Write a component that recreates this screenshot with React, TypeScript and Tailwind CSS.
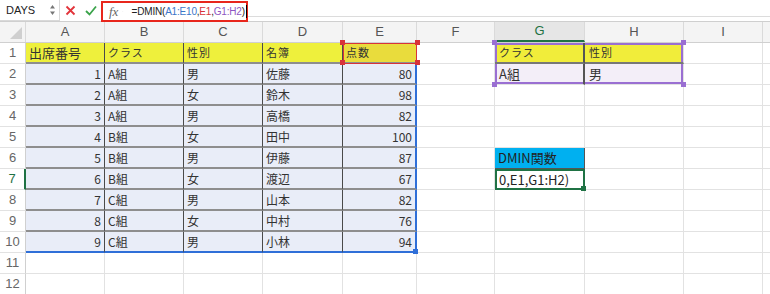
import React from 'react';

// 列幅 (行見出し, A..I, J)
const COLS = [26, 79, 79, 79, 80, 74, 78, 90, 99, 79, 20];
const LETTERS = ['', 'A', 'B', 'C', 'D', 'E', 'F', 'G', 'H', 'I', ''];

const DATA: [number, string, string, string, number][] = [
  [1, 'A組', '男', '佐藤', 80],
  [2, 'A組', '女', '鈴木', 98],
  [3, 'A組', '男', '高橋', 82],
  [4, 'B組', '女', '田中', 100],
  [5, 'B組', '男', '伊藤', 87],
  [6, 'B組', '女', '渡辺', 67],
  [7, 'C組', '男', '山本', 82],
  [8, 'C組', '女', '中村', 76],
  [9, 'C組', '男', '小林', 94],
];

const HEAD = ['出席番号', 'クラス', '性別', '名簿', '点数'];

type Corner = 'tl' | 'tr' | 'bl' | 'br';

interface CellInfo {
  text: string;
  cls: string;
  corners?: Corner[];
  dot?: string;
}

function cell(r: number, c: number): CellInfo {
  const base = 'border-r border-b border-r-[#e2e2e2] border-b-[#e2e2e2] bg-white';
  // 元データ表 A1:E10
  if (r >= 1 && r <= 10 && c >= 1 && c <= 5) {
    const right = c === 5 && r >= 2 ? 'border-r-2 border-r-[#2f6fd8]' : 'border-r border-r-[#4a4a4a]';
    const bottom = r === 10 ? 'border-b-2 border-b-[#2f6fd8]' : 'border-b-2 border-b-[#8e8e8e]';
    if (r === 1) {
      if (c === 5) {
        return {
          text: HEAD[4],
          cls: 'border-b-2 border-b-[#8e8e8e] bg-[#e9dc3c] text-[11px] tracking-[1px] pl-[3px] text-[#333] outline outline-1 -outline-offset-1 outline-[#d8333a]',
          corners: ['tl', 'tr', 'bl', 'br'],
          dot: 'bg-[#d8333a]',
        };
      }
      const size = c === 1 ? 'text-[13px]' : 'text-[11px] tracking-[1px]';
      return { text: HEAD[c - 1], cls: `${right} ${bottom} bg-[#eef03c] ${size} pl-[3px] text-[#333]` };
    }
    const v = DATA[r - 2][c - 1];
    const num = typeof v === 'number';
    return {
      text: String(v),
      cls: `${right} ${bottom} bg-[#e9edf8] text-[12px] text-[#333] ${num ? 'justify-end pr-[3px]' : 'pl-[3px]'}`,
      corners: r === 10 && c === 5 ? ['br'] : undefined,
      dot: 'bg-[#2f6fd8]',
    };
  }
  // 条件 G1:H2
  if ((r === 1 || r === 2) && (c === 7 || c === 8)) {
    const bg = r === 1 ? 'bg-[#f1ed3a]' : 'bg-[#f3eef8]';
    const text = r === 1 ? (c === 7 ? 'クラス' : '性別') : c === 7 ? 'A組' : '男';
    const size = r === 1 ? 'text-[11px] tracking-[1px]' : 'text-[13px]';
    const bb = r === 1 ? 'border-b-2 border-b-[#777]' : 'border-b border-b-[#e2e2e2]';
    const br = c === 7 ? 'border-r-2 border-r-[#555]' : 'border-r border-r-[#e2e2e2]';
    const shadow =
      r === 1
        ? c === 7
          ? 'shadow-[inset_2px_2px_0_0_#9a6fd2]'
          : 'shadow-[inset_-2px_2px_0_0_#9a6fd2]'
        : c === 7
          ? 'shadow-[inset_2px_-2px_0_0_#9a6fd2]'
          : 'shadow-[inset_-2px_-2px_0_0_#9a6fd2]';
    const corner: Corner = r === 1 ? (c === 7 ? 'tl' : 'tr') : c === 7 ? 'bl' : 'br';
    return {
      text,
      cls: `${bb} ${br} ${bg} ${size} ${shadow} pl-[4px] text-[#333]`,
      corners: [corner],
      dot: 'bg-[#9a6fd2]',
    };
  }
  if (r === 6 && c === 7) {
    return { text: 'DMIN関数', cls: 'border-r border-b border-[#555] bg-[#00b0f0] text-[13px] pl-[3px] text-[#222]' };
  }
  if (r === 7 && c === 7) {
    return {
      text: '0,E1,G1:H2)',
      cls: 'border-2 border-[#1f7244] bg-white text-[13px] pl-[2px] text-[#222]',
      corners: ['br'],
      dot: 'bg-[#1f7244]',
    };
  }
  return { text: '', cls: base };
}

const CORNER_POS: Record<Corner, string> = {
  tl: '-left-[3px] -top-[3px]',
  tr: '-right-[3px] -top-[3px]',
  bl: '-left-[3px] -bottom-[3px]',
  br: '-right-[3px] -bottom-[3px]',
};

export default function App() {
  return (
    <div className="w-[770px] h-[294px] overflow-hidden bg-white font-['Noto_Sans_CJK_JP',sans-serif]">
      {/* 数式バー */}
      <div className="flex h-[22px] items-stretch bg-white border-b border-[#cfcfcf]">
        <div className="flex w-[60px] items-center justify-between border-r border-b border-[#d9d9d9] pl-[6px] pr-[3px]">
          <span className="text-[11px] text-[#222] font-['Liberation_Sans',sans-serif]">DAYS</span>
          <svg width="7" height="14" viewBox="0 0 7 14">
            <path d="M1 5.5L3.5 2L6 5.5Z" fill="#777" />
            <path d="M1 8.5L3.5 12L6 8.5Z" fill="#777" />
          </svg>
        </div>
        <div className="flex w-[41px] items-center justify-around">
          <svg width="11" height="11" viewBox="0 0 11 11">
            <path d="M1.5 1.5L9.5 9.5M9.5 1.5L1.5 9.5" stroke="#e2343a" strokeWidth="1.8" />
          </svg>
          <svg width="12" height="11" viewBox="0 0 12 11">
            <path d="M1 6L4.5 9.5L11 1.5" stroke="#3aa34a" strokeWidth="1.8" fill="none" />
          </svg>
        </div>
        <div className="flex w-[147px] items-center border-2 border-[#e8261c] mt-[1px] h-[21px]">
          <span className="pl-[6px] text-[13px] italic text-[#666] font-['Liberation_Serif',serif]">fx</span>
          <svg className="ml-[4px]" width="7" height="5" viewBox="0 0 7 5">
            <path d="M1 1L3.5 3.5L6 1" stroke="#aaa" strokeWidth="1" fill="none" />
          </svg>
          <span className="ml-[8px] text-[10px] text-[#222] font-['Liberation_Sans',sans-serif] tracking-[-0.2px]">
            =DMIN(<span className="text-[#3b76c8]">A1:E10</span>,<span className="text-[#d8333a]">E1</span>,
            <span className="text-[#8e56c2]">G1:H2</span>)
          </span>
          <span className="ml-[1px] w-[1px] h-[13px] bg-black" />
        </div>
        <div className="flex-1 border-b border-[#dcdcdc] mb-[4px]" />
      </div>

      {/* 列見出し */}
      <div className="flex h-[21px] bg-[#f4f4f4] border-b border-[#d0d0d0]">
        {COLS.map((w, c) => (
          <div
            key={c}
            style={{ width: w }}
            className={`flex shrink-0 items-center justify-center border-r border-[#dadada] text-[13px] font-['Liberation_Sans',sans-serif] ${
              c === 7 ? 'bg-[#e6e6e6] text-[#1f7244] border-b-2 border-b-[#1f7244]' : 'text-[#555]'
            } ${c === 0 ? 'items-end justify-end pr-[3px] pb-[3px]' : ''}`}
          >
            {c === 0 ? (
              <svg width="12" height="12" viewBox="0 0 12 12">
                <path d="M12 0L12 12L0 12Z" fill="#cfcfcf" />
              </svg>
            ) : (
              LETTERS[c]
            )}
          </div>
        ))}
      </div>

      {/* セル */}
      {Array.from({ length: 12 }, (_, i) => i + 1).map((r) => (
        <div key={r} className="flex h-[21px]">
          {COLS.map((w, c) => {
            if (c === 0) {
              return (
                <div
                  key={c}
                  style={{ width: w }}
                  className={`flex shrink-0 items-center justify-center border-b border-[#e2e2e2] bg-white text-[13px] font-['Liberation_Sans',sans-serif] ${
                    r === 7 ? 'text-[#1f7244] border-r-2 border-r-[#1f7244]' : 'text-[#666] border-r border-r-[#d0d0d0]'
                  }`}
                >
                  {r}
                </div>
              );
            }
            const info = cell(r, c);
            return (
              <div
                key={c}
                style={{ width: w }}
                className={`relative flex shrink-0 items-center whitespace-nowrap ${info.cls}`}
              >
                {info.text}
                {info.corners?.map((k) => (
                  <span key={k} className={`absolute z-10 w-[5px] h-[5px] ${CORNER_POS[k]} ${info.dot}`} />
                ))}
              </div>
            );
          })}
        </div>
      ))}
    </div>
  );
}
